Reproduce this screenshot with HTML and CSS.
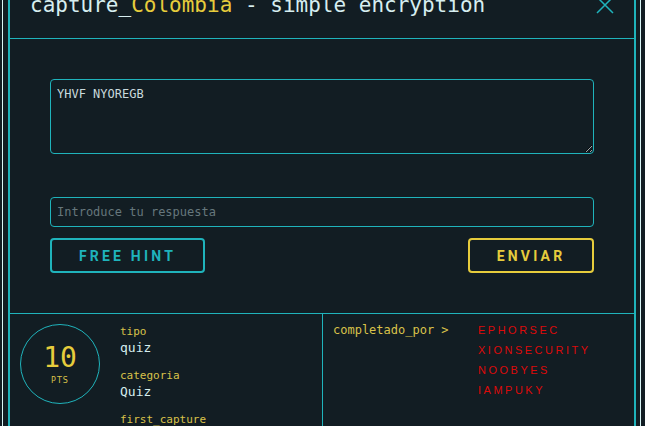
FILE: index.html
```html
<!DOCTYPE html>
<html lang="es">
<head>
<meta charset="utf-8">
<title>capture_Colombia - simple encryption</title>
<link rel="stylesheet" href="styles.css">
</head>
<body>
<div class="frame">
  <div class="modal">
    <header class="head">
      <h1 class="title">capture_<span class="hl">Colombia</span> - simple encryption</h1>
      <svg class="close" width="18" height="18" viewBox="0 0 18 18" aria-label="cerrar"><path d="M1 1 L17 17 M17 1 L1 17" stroke="#1fb3bb" stroke-width="1.5" fill="none"/></svg>
    </header>
    <section class="body">
      <textarea class="cipher" readonly>YHVF NYOREGB</textarea>
      <input class="answer" type="text" placeholder="Introduce tu respuesta">
      <div class="actions">
        <button class="btn hint">FREE HINT</button>
        <button class="btn send">ENVIAR</button>
      </div>
    </section>
    <section class="meta">
      <div class="stats">
        <div class="points">
          <span class="num">10</span>
          <span class="pts">PTS</span>
        </div>
        <dl class="info">
          <div class="group"><dt>tipo</dt><dd>quiz</dd></div>
          <div class="group"><dt>categoria</dt><dd>Quiz</dd></div>
          <div class="group"><dt>first_capture</dt><dd>EPHORSEC</dd></div>
        </dl>
      </div>
      <div class="solvers">
        <span class="solvers-label">completado_por &gt;</span>
        <ul class="names">
          <li>EPHORSEC</li>
          <li>XIONSECURITY</li>
          <li>NOOBYES</li>
          <li>IAMPUKY</li>
        </ul>
      </div>
    </section>
  </div>
</div>
</body>
</html>
```
FILE: styles.css
```css
html, body {
  margin: 0;
  padding: 0;
  background: #121d23;
  overflow: hidden;
}

.frame {
  margin: -22px 4px 0 2px;
  padding: 0 4px 0 5px;
  border-left: 1px solid #d9f6f6;
  border-right: 1px solid #d9f6f6;
  min-height: 520px;
  box-sizing: border-box;
}

.modal {
  border-left: 2px solid #1fb3bb;
  border-right: 2px solid #1fb3bb;
  min-height: 520px;
  font-family: "DejaVu Sans Mono", monospace;
}

.head {
  display: flex;
  align-items: center;
  justify-content: space-between;
  padding: 15px 20px 21px 20px;
  border-bottom: 1px solid #1fb3bb;
}

.title {
  margin: 0;
  font-size: 21px;
  font-weight: normal;
  line-height: 24px;
  color: #d6eef0;
  white-space: nowrap;
}

.hl {
  color: #e6cc3c;
}

.close {
  display: block;
}

.body {
  padding: 40px 40px 40px 40px;
}

.cipher {
  display: block;
  width: 100%;
  height: 75px;
  box-sizing: border-box;
  margin: 0;
  padding: 7px 6px;
  background: transparent;
  border: 1px solid #1fb3bb;
  border-radius: 4px;
  color: #c9dadd;
  font-family: "DejaVu Sans Mono", monospace;
  font-size: 12px;
  line-height: 14px;
  outline: none;
}

.answer {
  display: block;
  width: 100%;
  height: 30px;
  box-sizing: border-box;
  margin: 43px 0 0 0;
  padding: 0 6px;
  background: transparent;
  border: 1px solid #1fb3bb;
  border-radius: 4px;
  color: #c9dadd;
  font-family: "DejaVu Sans Mono", monospace;
  font-size: 12px;
  outline: none;
}

.answer::placeholder {
  color: #66777c;
}

.actions {
  display: flex;
  justify-content: space-between;
  margin-top: 11px;
}

.btn {
  height: 35px;
  box-sizing: border-box;
  padding: 0 24px;
  background: transparent;
  border: 2px solid;
  border-radius: 4px;
  font-family: Roboto, "Liberation Sans", sans-serif;
  font-weight: 700;
  font-size: 14px;
  letter-spacing: 3.2px;
}

.hint {
  color: #1fb3bb;
  border-color: #1fb3bb;
  width: 155px;
}

.send {
  color: #e6cc3c;
  border-color: #e6cc3c;
  width: 126px;
}

.meta {
  display: grid;
  grid-template-columns: 313px 1fr;
  border-top: 1px solid #1fb3bb;
}

.stats {
  display: flex;
  align-items: flex-start;
  gap: 20px;
  padding: 10px 10px 10px 10px;
  border-right: 1px solid #1fb3bb;
}

.points {
  flex: none;
  width: 80px;
  height: 80px;
  box-sizing: border-box;
  border: 1px solid #1fb3bb;
  border-radius: 50%;
  display: flex;
  flex-direction: column;
  align-items: center;
  justify-content: center;
}

.num {
  font-size: 28px;
  line-height: 28px;
  color: #e6cc3c;
  margin-top: 2px;
}

.pts {
  margin-top: 4px;
  font-family: "DejaVu Sans", sans-serif;
  font-size: 8px;
  line-height: 10px;
  letter-spacing: 1px;
  color: #d9c24a;
}

.info {
  margin: 0;
  display: flex;
  flex-direction: column;
  gap: 12px;
}

.info dt {
  font-size: 11px;
  line-height: 15px;
  color: #d9c24a;
}

.info dd {
  margin: 0;
  font-size: 13px;
  line-height: 17px;
  color: #d6eef0;
}

.solvers {
  display: flex;
  align-items: flex-start;
  padding: 6px 10px 10px 10px;
}

.solvers-label {
  flex: none;
  width: 145px;
  font-size: 12px;
  line-height: 20px;
  color: #d9c24a;
  white-space: pre;
}

.names {
  list-style: none;
  margin: 0;
  padding: 0;
  font-family: "Liberation Sans", sans-serif;
  font-size: 11px;
  line-height: 20px;
  letter-spacing: 2.5px;
  color: #dc0a0a;
}
```
